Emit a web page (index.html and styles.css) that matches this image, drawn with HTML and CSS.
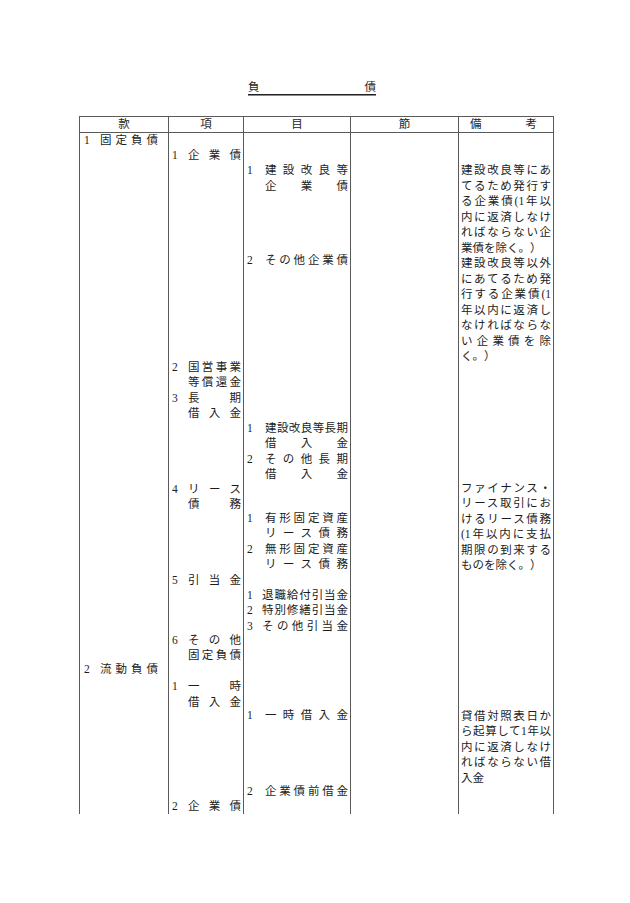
FILE: index.html
```html
<!DOCTYPE html>
<html lang="ja">
<head>
<meta charset="utf-8">
<title>負債</title>
<link rel="stylesheet" href="styles.css">
</head>
<body>
<div class="page">
  <h1 class="title"><span>負</span><span>債</span></h1>
  <div class="sheet">
    <div class="hd">款</div>
    <div class="hd">項</div>
    <div class="hd">目</div>
    <div class="hd">節</div>
    <div class="hd hd-note">備考</div>

    <div class="col col-kan">
      <div class="item"><span class="num">1</span><div class="txt"><div class="ln">固定負債</div></div></div>
      <div class="item k2"><span class="num">2</span><div class="txt"><div class="ln">流動負債</div></div></div>
    </div>

    <div class="col col-kou">
      <div class="item h1"><span class="num">1</span><div class="txt"><div class="ln">企業債</div></div></div>
      <div class="item h2"><span class="num">2</span><div class="txt"><div class="ln">国営事業</div><div class="ln">等償還金</div></div></div>
      <div class="item"><span class="num">3</span><div class="txt"><div class="ln">長期</div><div class="ln">借入金</div></div></div>
      <div class="item h4"><span class="num">4</span><div class="txt"><div class="ln">リース</div><div class="ln">債務</div></div></div>
      <div class="item h5"><span class="num">5</span><div class="txt"><div class="ln">引当金</div></div></div>
      <div class="item h6"><span class="num">6</span><div class="txt"><div class="ln">その他</div><div class="ln">固定負債</div></div></div>
      <div class="item h7"><span class="num">1</span><div class="txt"><div class="ln">一時</div><div class="ln">借入金</div></div></div>
      <div class="item h8"><span class="num">2</span><div class="txt"><div class="ln">企業債</div></div></div>
    </div>

    <div class="col col-moku">
      <div class="item m1"><span class="num">1</span><div class="txt"><div class="ln">建設改良等</div><div class="ln">企業債</div></div></div>
      <div class="item m2"><span class="num">2</span><div class="txt"><div class="ln">その他企業債</div></div></div>
      <div class="item m3"><span class="num">1</span><div class="txt"><div class="ln">建設改良等長期</div><div class="ln">借入金</div></div></div>
      <div class="item"><span class="num">2</span><div class="txt"><div class="ln">その他長期</div><div class="ln">借入金</div></div></div>
      <div class="item m5"><span class="num">1</span><div class="txt"><div class="ln">有形固定資産</div><div class="ln">リース債務</div></div></div>
      <div class="item"><span class="num">2</span><div class="txt"><div class="ln">無形固定資産</div><div class="ln">リース債務</div></div></div>
      <div class="item m7"><span class="num num-narrow">1</span><div class="txt"><div class="ln">退職給付引当金</div></div></div>
      <div class="item"><span class="num num-narrow">2</span><div class="txt"><div class="ln">特別修繕引当金</div></div></div>
      <div class="item"><span class="num num-narrow">3</span><div class="txt"><div class="ln">その他引当金</div></div></div>
      <div class="item m10"><span class="num">1</span><div class="txt"><div class="ln">一時借入金</div></div></div>
      <div class="item m11"><span class="num">2</span><div class="txt"><div class="ln">企業債前借金</div></div></div>
    </div>

    <div class="col col-setsu"></div>

    <div class="col col-note">
      <div class="note b1">
        <div class="ln">建設改良等にあ</div>
        <div class="ln">てるため発行す</div>
        <div class="ln">る企業債(1年以</div>
        <div class="ln">内に返済しなけ</div>
        <div class="ln">ればならない企</div>
        <div class="ln ln-end">業債を除く。）</div>
      </div>
      <div class="note">
        <div class="ln">建設改良等以外</div>
        <div class="ln">にあてるため発</div>
        <div class="ln">行する企業債(1</div>
        <div class="ln">年以内に返済し</div>
        <div class="ln">なければならな</div>
        <div class="ln">い企業債を除</div>
        <div class="ln ln-end">く。）</div>
      </div>
      <div class="note b3">
        <div class="ln">ファイナンス・</div>
        <div class="ln">リース取引にお</div>
        <div class="ln">けるリース債務</div>
        <div class="ln">(1年以内に支払</div>
        <div class="ln">期限の到来する</div>
        <div class="ln ln-end">ものを除く。）</div>
      </div>
      <div class="note b4">
        <div class="ln">貸借対照表日か</div>
        <div class="ln">ら起算して1年以</div>
        <div class="ln">内に返済しなけ</div>
        <div class="ln">ればならない借</div>
        <div class="ln ln-end">入金</div>
      </div>
    </div>
  </div>
</div>
</body>
</html>
```

FILE: styles.css
```css
* {
  box-sizing: border-box;
  margin: 0;
  padding: 0;
}

body {
  margin: 0;
  background: #ffffff;
  color: #1c1c1c;
  font-family: "Liberation Serif", "Noto Sans CJK JP", serif;
  font-size: 11.5px;
  text-spacing-trim: space-all;
}

.page {
  width: 630px;
  height: 903px;
  padding: 81px 0 0 79px;
}

.title {
  width: 128px;
  margin-left: 169px;
  display: flex;
  justify-content: space-between;
  font-size: 11.5px;
  font-weight: normal;
  line-height: 13px;
  border-bottom: 1px solid #222;
  box-shadow: 0 1px 0 #8a8a8a;
}

.sheet {
  display: grid;
  grid-template-columns: 89px 75px 107px 108px 96px;
  grid-template-rows: 17px 681px;
  width: 475px;
  margin-top: 21px;
}

.hd {
  border-top: 1px solid #5a5a5a;
  border-bottom: 1px solid #5a5a5a;
  border-left: 1px solid #5a5a5a;
  text-align: center;
  line-height: 15px;
}

.hd-note {
  border-right: 1px solid #5a5a5a;
  padding: 0 16px 0 11px;
  text-align: justify;
  text-align-last: justify;
}

.col {
  border-left: 1px solid #5a5a5a;
  display: flex;
  flex-direction: column;
  line-height: 15.5px;
}

.col-kan { padding: 0 10px 0 4px; }
.col-kou { padding: 0 2px 0 3px; }
.col-moku { padding: 0 2px 0 3px; }
.col-note {
  padding: 0 2px;
  border-right: 1px solid #5a5a5a;
}

.item {
  display: flex;
  flex-shrink: 0;
}

.num {
  flex: none;
  width: 16px;
}

.col-moku .num { width: 18px; }
.col-moku .num-narrow { width: 15px; }

.txt {
  flex: 1;
  min-width: 0;
}

.ln {
  text-align: justify;
  text-align-last: justify;
}

.ln-end {
  text-align: left;
  text-align-last: left;
}

.note { flex-shrink: 0; }

/* vertical placement of entries */
.k2 { margin-top: 513px; }

.h1 { margin-top: 15px; }
.h2 { margin-top: 196px; }
.h4 { margin-top: 60px; }
.h5 { margin-top: 60.5px; }
.h6 { margin-top: 44px; }
.h7 { margin-top: 15.5px; }
.h8 { margin-top: 89px; }

.m1 { margin-top: 30px; }
.m2 { margin-top: 59px; }
.m3 { margin-top: 152px; }
.m5 { margin-top: 28px; }
.m7 { margin-top: 15px; }
.m10 { margin-top: 74px; }
.m11 { margin-top: 60.5px; }

.b1 { margin-top: 30px; }
.b3 { margin-top: 116px; }
.b4 { margin-top: 135px; }
```
